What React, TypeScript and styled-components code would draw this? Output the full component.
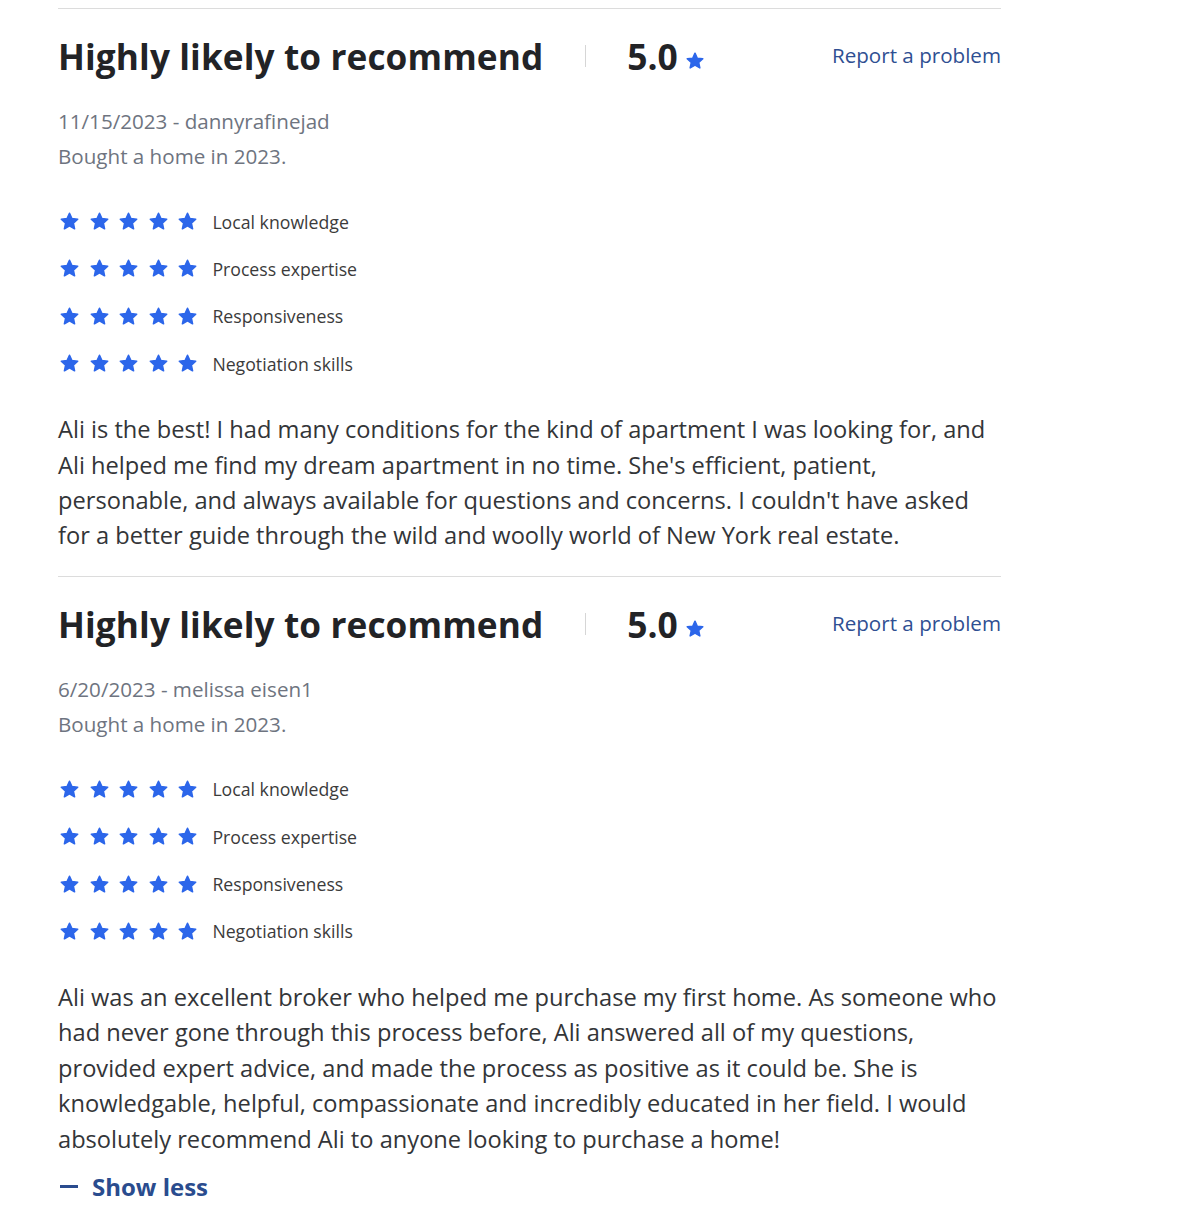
import React from "react";
import styled, { createGlobalStyle } from "styled-components";

const Global = createGlobalStyle`
  html, body { margin: 0; padding: 0; background: #fff; }
  body { font-family: "Open Sans", "Noto Sans", sans-serif; -webkit-font-smoothing: antialiased; }
`;

const Page = styled.div`
  width: 943px;
  margin-left: 58px;
  padding-top: 8px;
`;

const Review = styled.section`
  border-top: 1px solid #dcdcdc;
  padding: 22px 0 22px 0;
`;

const Header = styled.div`
  display: flex;
  align-items: center;
  height: 50px;
`;

const Title = styled.h2`
  margin: 0;
  font-size: 35.2px;
  font-weight: 700;
  color: #222326;
  line-height: 50px;
  letter-spacing: 0.1px;
`;

const Sep = styled.span`
  width: 1px;
  height: 22px;
  background: #d6d6d6;
  margin: 0 41px 0 42px;
`;

const Score = styled.span`
  font-size: 35.4px;
  font-weight: 700;
  color: #222326;
  line-height: 50px;
`;

const ScoreStar = styled.span`
  display: inline-flex;
  margin: 10px 0 0 7px;
`;

const Link = styled.a`
  margin-left: auto;
  font-size: 20.6px;
  color: #2f4f92;
  text-decoration: none;
  line-height: 30px;
  margin-top: -2px;
`;

const Meta = styled.div`
  margin-top: 23px;
  font-size: 20.6px;
  line-height: 35px;
  color: #6e7480;
`;

const Ratings = styled.ul`
  list-style: none;
  margin: 24px 0 0;
  padding: 0;
`;

const RatingRow = styled.li`
  display: flex;
  align-items: center;
  height: 47.3px;
`;

const Stars = styled.span`
  display: inline-flex;
  gap: 8.6px;
  margin-right: 14px;
  margin-left: 1px;
`;

const Label = styled.span`
  font-size: 17.7px;
  color: #3b3b3b;
`;

const Body = styled.p`
  margin: 25px 0 0;
  font-size: 23.65px;
  line-height: 35.4px;
  color: #333538;
`;

const ShowLess = styled.a`
  display: flex;
  align-items: center;
  gap: 14px;
  margin-top: 12px;
  font-size: 24px;
  font-weight: 700;
  color: #2a4c8e;
  line-height: 35px;
  text-decoration: none;
`;

const Dash = styled.span`
  width: 18px;
  height: 3px;
  background: #2a4c8e;
  margin-left: 2px;
`;

const Star: React.FC<{ size: number }> = ({ size }) => (
  <svg width={size} height={size} viewBox="0 0 24 24">
    <path
      d="M12 2.6l2.75 6.05 6.6.72-4.93 4.46 1.38 6.5L12 17.02l-5.8 3.31 1.38-6.5-4.93-4.46 6.6-.72z"
      fill="#2c66ea"
      stroke="#2c66ea"
      strokeWidth="1.8"
      strokeLinejoin="round"
    />
  </svg>
);

const categories = ["Local knowledge", "Process expertise", "Responsiveness", "Negotiation skills"];

type R = { date: string; user: string; text: string; showLess?: boolean };

const reviews: R[] = [
  {
    date: "11/15/2023",
    user: "dannyrafinejad",
    text:
      "Ali is the best! I had many conditions for the kind of apartment I was looking for, and Ali helped me find my dream apartment in no time. She's efficient, patient, personable, and always available for questions and concerns. I couldn't have asked for a better guide through the wild and woolly world of New York real estate.",
  },
  {
    date: "6/20/2023",
    user: "melissa eisen1",
    text:
      "Ali was an excellent broker who helped me purchase my first home. As someone who had never gone through this process before, Ali answered all of my questions, provided expert advice, and made the process as positive as it could be. She is knowledgable, helpful, compassionate and incredibly educated in her field. I would absolutely recommend Ali to anyone looking to purchase a home!",
    showLess: true,
  },
];

export default function App() {
  return (
    <>
      <Global />
      <Page>
        {reviews.map((r) => (
          <Review key={r.user}>
            <Header>
              <Title>Highly likely to recommend</Title>
              <Sep />
              <Score>5.0</Score>
              <ScoreStar>
                <Star size={20} />
              </ScoreStar>
              <Link href="#">Report a problem</Link>
            </Header>
            <Meta>
              {r.date} - {r.user}
              <br />
              Bought a home in 2023.
            </Meta>
            <Ratings>
              {categories.map((c) => (
                <RatingRow key={c}>
                  <Stars>
                    {[0, 1, 2, 3, 4].map((i) => (
                      <Star key={i} size={21} />
                    ))}
                  </Stars>
                  <Label>{c}</Label>
                </RatingRow>
              ))}
            </Ratings>
            <Body>{r.text}</Body>
            {r.showLess && (
              <ShowLess href="#">
                <Dash />
                Show less
              </ShowLess>
            )}
          </Review>
        ))}
      </Page>
    </>
  );
}
